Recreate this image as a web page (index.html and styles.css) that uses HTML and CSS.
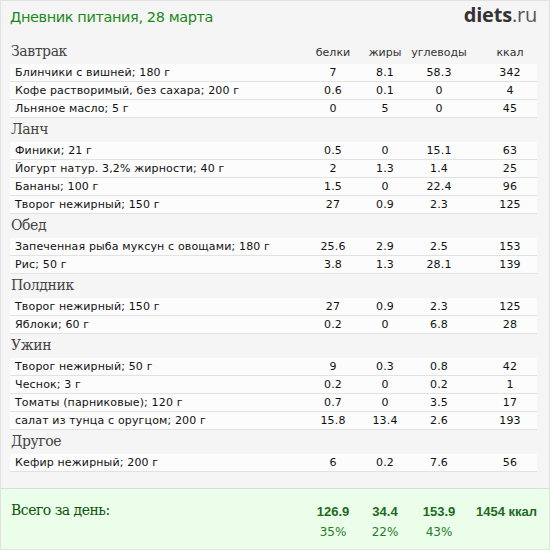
FILE: index.html
```html
<!DOCTYPE html>
<html lang="ru">
<head>
<meta charset="utf-8">
<title>Дневник питания</title>
<link rel="stylesheet" href="styles.css">
</head>
<body>
<div class="page">
  <div class="content">
    <header class="top">
      <h1 class="title">Дневник питания, 28 марта</h1>
      <div class="logo"><b>diets</b>.ru</div>
    </header>

    <section class="meal">
      <div class="meal-head"><span class="meal-name">Завтрак</span><span>белки</span><span>жиры</span><span>углеводы</span><span class="kcal">ккал</span></div>
      <div class="row"><span class="name">Блинчики с вишней; 180 г</span><span>7</span><span>8.1</span><span>58.3</span><span class="kcal">342</span></div>
      <div class="row"><span class="name">Кофе растворимый, без сахара; 200 г</span><span>0.6</span><span>0.1</span><span>0</span><span class="kcal">4</span></div>
      <div class="row"><span class="name">Льняное масло; 5 г</span><span>0</span><span>5</span><span>0</span><span class="kcal">45</span></div>
    </section>

    <section class="meal">
      <div class="meal-head"><span class="meal-name">Ланч</span></div>
      <div class="row"><span class="name">Финики; 21 г</span><span>0.5</span><span>0</span><span>15.1</span><span class="kcal">63</span></div>
      <div class="row"><span class="name">Йогурт натур. 3,2% жирности; 40 г</span><span>2</span><span>1.3</span><span>1.4</span><span class="kcal">25</span></div>
      <div class="row"><span class="name">Бананы; 100 г</span><span>1.5</span><span>0</span><span>22.4</span><span class="kcal">96</span></div>
      <div class="row"><span class="name">Творог нежирный; 150 г</span><span>27</span><span>0.9</span><span>2.3</span><span class="kcal">125</span></div>
    </section>

    <section class="meal">
      <div class="meal-head"><span class="meal-name">Обед</span></div>
      <div class="row"><span class="name">Запеченная рыба муксун с овощами; 180 г</span><span>25.6</span><span>2.9</span><span>2.5</span><span class="kcal">153</span></div>
      <div class="row"><span class="name">Рис; 50 г</span><span>3.8</span><span>1.3</span><span>28.1</span><span class="kcal">139</span></div>
    </section>

    <section class="meal">
      <div class="meal-head"><span class="meal-name">Полдник</span></div>
      <div class="row"><span class="name">Творог нежирный; 150 г</span><span>27</span><span>0.9</span><span>2.3</span><span class="kcal">125</span></div>
      <div class="row"><span class="name">Яблоки; 60 г</span><span>0.2</span><span>0</span><span>6.8</span><span class="kcal">28</span></div>
    </section>

    <section class="meal">
      <div class="meal-head"><span class="meal-name">Ужин</span></div>
      <div class="row"><span class="name">Творог нежирный; 50 г</span><span>9</span><span>0.3</span><span>0.8</span><span class="kcal">42</span></div>
      <div class="row"><span class="name">Чеснок; 3 г</span><span>0.2</span><span>0</span><span>0.2</span><span class="kcal">1</span></div>
      <div class="row"><span class="name">Томаты (парниковые); 120 г</span><span>0.7</span><span>0</span><span>3.5</span><span class="kcal">17</span></div>
      <div class="row"><span class="name">салат из тунца с оругцом; 200 г</span><span>15.8</span><span>13.4</span><span>2.6</span><span class="kcal">193</span></div>
    </section>

    <section class="meal">
      <div class="meal-head"><span class="meal-name">Другое</span></div>
      <div class="row"><span class="name">Кефир нежирный; 200 г</span><span>6</span><span>0.2</span><span>7.6</span><span class="kcal">56</span></div>
    </section>
  </div>

  <footer class="totals">
    <div class="totals-label">Всего за день:</div>
    <div class="tot">126.9</div>
    <div class="tot">34.4</div>
    <div class="tot">153.9</div>
    <div class="tot tot-kcal">1454 ккал</div>
    <div></div>
    <div class="pct">35%</div>
    <div class="pct">22%</div>
    <div class="pct">43%</div>
    <div></div>
  </footer>
</div>
</body>
</html>
```

FILE: styles.css
```css
* { box-sizing: border-box; }

html, body {
  margin: 0;
  padding: 0;
  background: #f5f5f5;
}

.page {
  width: 550px;
  height: 550px;
  border: 1px solid #e2e2e2;
  background: #f5f5f5;
  display: flex;
  flex-direction: column;
  font-family: "DejaVu Sans", Verdana, sans-serif;
  color: #111;
}

.content {
  padding: 2px 12px 0 9px;
}

.top {
  display: flex;
  justify-content: space-between;
  align-items: baseline;
  height: 37px;
}

.title {
  margin: 0;
  font-family: "DejaVu Sans", Verdana, sans-serif;
  font-weight: normal;
  font-size: 14.5px;
  line-height: 24px;
  letter-spacing: -0.4px;
  color: #1a8a1a;
}

.logo {
  font-family: "Open Sans", "DejaVu Sans", sans-serif;
  font-size: 20px;
  line-height: 24px;
  color: #555;
  letter-spacing: -0.2px;
}

.logo b {
  font-weight: 700;
  color: #333;
}

.meal-head,
.row,
.totals {
  display: grid;
  grid-template-columns: 1fr 58px 46px 62px 67px;
}

.meal-head {
  height: 24px;
  align-items: end;
  padding-bottom: 4px;
  font-size: 11px;
  line-height: 14px;
  color: #333;
}

.meal-head > span {
  text-align: center;
}

.meal-head .meal-name {
  text-align: left;
  font-family: "DejaVu Serif", Georgia, serif;
  font-size: 14px;
  line-height: 18px;
  color: #444;
  letter-spacing: -0.4px;
  padding-left: 1px;
}

.kcal {
  padding-left: 13px;
}

.row {
  height: 18px;
  background: #fcfcfc;
  border-bottom: 1px solid #e2e2e2;
  font-size: 11px;
  line-height: 17px;
  color: #111;
  letter-spacing: 0.15px;
}

.row > span {
  text-align: center;
  white-space: nowrap;
}

.row .name {
  text-align: left;
  padding-left: 5px;
}

.totals {
  flex: 1;
  margin-top: 16px;
  border-top: 1px solid #dcdcdc;
  background: #eafeea;
  padding: 10px 12px 0 10px;
  align-content: start;
  grid-template-columns: 1fr 58px 46px 62px 67px;
}

.totals-label {
  font-family: "DejaVu Serif", Georgia, serif;
  font-size: 14px;
  line-height: 22px;
  letter-spacing: -0.5px;
  color: #0b540b;
}

.tot {
  font-family: "Liberation Sans", Arial, sans-serif;
  font-weight: bold;
  font-size: 13px;
  line-height: 22px;
  color: #1d6a1d;
  text-align: center;
  padding-top: 2px;
}

.tot-kcal {
  text-align: right;
  white-space: nowrap;
}

.pct {
  font-size: 12px;
  line-height: 18px;
  color: #2a7a2a;
  text-align: center;
}
```
